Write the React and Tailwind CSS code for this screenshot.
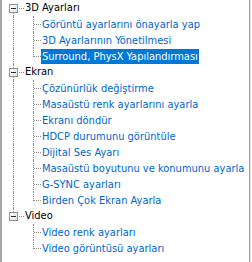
import React from "react";

const groups = [
  {
    title: "3D Ayarları",
    items: [
      "Görüntü ayarlarını önayarla yap",
      "3D Ayarlarının Yönetilmesi",
      "Surround, PhysX Yapılandırması",
    ],
  },
  {
    title: "Ekran",
    items: [
      "Çözünürlük değiştirme",
      "Masaüstü renk ayarlarını ayarla",
      "Ekranı döndür",
      "HDCP durumunu görüntüle",
      "Dijital Ses Ayarı",
      "Masaüstü boyutunu ve konumunu ayarla",
      "G-SYNC ayarları",
      "Birden Çok Ekran Ayarla",
    ],
  },
  {
    title: "Video",
    items: ["Video renk ayarları", "Video görüntüsü ayarları"],
  },
];

const selected = "Surround, PhysX Yapılandırması";
const line = "border-[#8a8a8a] border-dotted";

function MinusBox() {
  return (
    <span className="absolute left-[6px] top-[4px] w-[9px] h-[9px] border border-[#919191] bg-gradient-to-br from-white to-[#e4e4e4] flex items-center justify-center">
      <span className="w-[5px] h-px bg-[#2a2a2a]" />
    </span>
  );
}

function GroupRow({ title, first, last }) {
  return (
    <div className="flex h-4 items-center">
      <div className="relative w-[20px] h-4 shrink-0">
        {!first && <span className={`absolute left-[10px] top-0 h-[4px] border-l ${line}`} />}
        {!last && <span className={`absolute left-[10px] top-[13px] h-[3px] border-l ${line}`} />}
        <MinusBox />
        <span className={`absolute left-[16px] top-[8px] w-[5px] border-t ${line}`} />
      </div>
      <span className="pl-[2px] text-black">{title}</span>
    </div>
  );
}

function ItemRow({ label, lastGroup, lastItem }) {
  const active = label === selected;
  return (
    <div className="flex h-4 items-center">
      <div className="relative w-[20px] h-4 shrink-0">
        {!lastGroup && <span className={`absolute left-[10px] top-0 h-4 border-l ${line}`} />}
      </div>
      <div className="relative w-[18px] h-4 shrink-0">
        <span className={`absolute left-[10px] top-0 border-l ${line} ${lastItem ? "h-[9px]" : "h-4"}`} />
        <span className={`absolute left-[11px] top-[8px] w-[7px] border-t ${line}`} />
      </div>
      <span
        className={`px-[1px] leading-[15px] ${
          active ? "bg-[#0078d7] text-white" : "text-[#0066cc]"
        }`}
      >
        {label}
      </span>
    </div>
  );
}

export default function App() {
  return (
    <div
      className="flex w-[252px] h-[262px] bg-white text-[11px] whitespace-nowrap"
      style={{ fontFamily: '"DejaVu Sans Condensed", "Liberation Sans", sans-serif' }}
    >
      <div className="w-[250px] h-full border-l-2 border-r border-l-[#a6a6a6] border-r-[#a0a0a0] pl-[1px] overflow-hidden">
        {groups.map((g, gi) => (
          <div key={g.title}>
            <GroupRow title={g.title} first={gi === 0} last={gi === groups.length - 1} />
            {g.items.map((it, ii) => (
              <ItemRow
                key={it}
                label={it}
                lastGroup={gi === groups.length - 1}
                lastItem={ii === g.items.length - 1}
              />
            ))}
          </div>
        ))}
      </div>
      <div className="w-px h-full bg-[#e3e3e3]" />
      <div className="w-px h-full bg-white" />
    </div>
  );
}
